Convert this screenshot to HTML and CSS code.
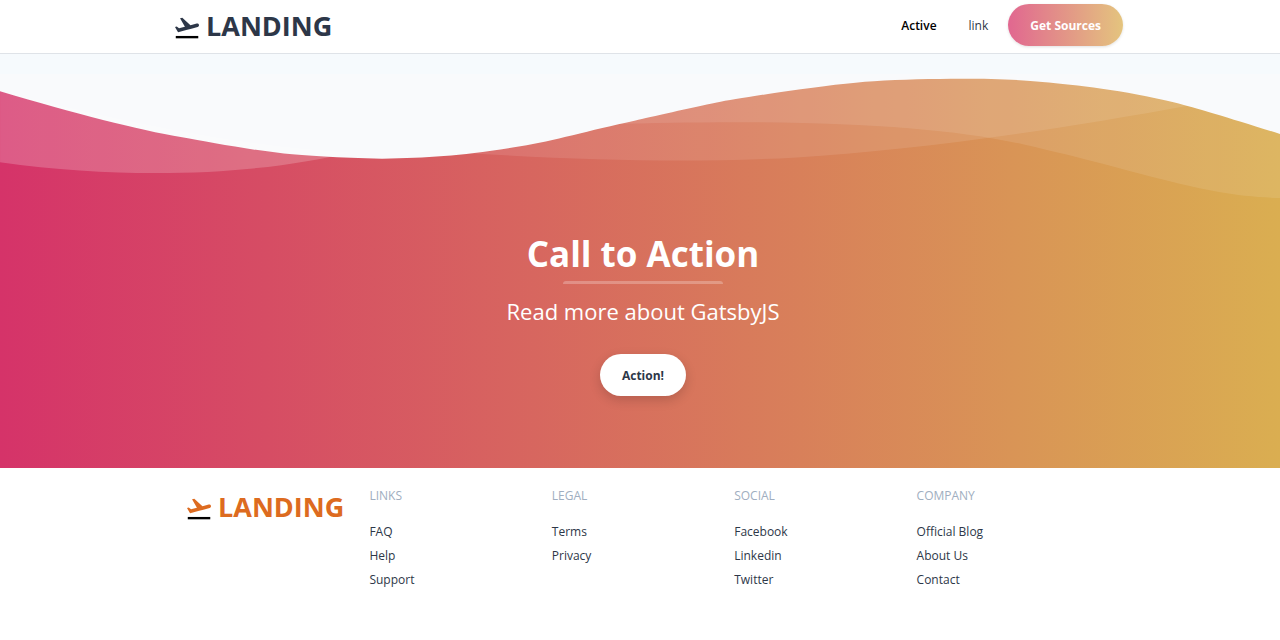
FILE: index.html
```html
<!DOCTYPE html>
<html lang="en">
<head>
<meta charset="utf-8">
<meta name="viewport" content="width=device-width, initial-scale=1">
<title>Landing</title>
<link rel="stylesheet" href="styles.css">
</head>
<body>
<header class="topbar">
  <nav class="container nav">
    <a class="logo" href="#">
      <svg class="logo-icon" viewBox="0 0 512 512" aria-hidden="true">
        <rect x="16.5" y="425.6" width="479.8" height="50.5" fill="#000"/>
        <path fill="currentColor" d="M510.7 189.151C505.271 168.95 484.565 156.956 464.365 162.385L330.156 198.367L155.924 35.878L107.19 49.008L211.729 230.183L86.232 263.767L36.614 224.754L0 234.603L45.957 314.27L65.274 347.727L105.802 336.869L240.011 300.886L349.726 271.469L483.935 235.486C504.134 230.057 516.129 209.352 510.7 189.151Z"/>
      </svg>
      LANDING
    </a>
    <div class="nav-links">
      <a class="nav-link active" href="#">Active</a>
      <a class="nav-link" href="#">link</a>
    </div>
    <button class="pill pill-gradient" type="button">Get Sources</button>
  </nav>
</header>
<main>
  <section class="cta">
    <svg class="wave" viewBox="0 -1 1434 147" aria-hidden="true">
      <g transform="translate(-1 -14)">
        <path fill="#f9fafc" d="M1441,82C1383.555,64.3 1342.555,51.3 1317,45C1259.5,30.824 1206.707,25.526 1169,22C1129.711,17.326 1044.426,17.475 980,21C954.25,22.409 922.25,26.742 884,32C845.122,37.787 818.455,42.121 804,45C776.833,50.41 728.136,61.77 713,65C660.023,76.309 621.544,87.729 584,94C517.525,105.104 484.525,106.438 429,108C379.49,106.484 342.823,104.484 319,102C278.571,97.783 231.737,88.736 205,84C154.629,75.076 86.296,57.743 0,32L0,0L1441,0Z"/>
        <g transform="translate(1 15) rotate(180 719.5 68.5)" fill="#fff">
          <path opacity=".1" d="M0,0C90.728,0.928 147.913,27.188 291.91,59.912C387.908,81.728 543.605,89.335 759,82.733C469.336,156.254 216.336,153.668 0,74.973"/>
          <path opacity=".1" d="M100,104.708C277.413,72.235 426.148,52.525 546.204,45.579C666.259,38.633 810.525,41.798 979,55.074C931.07,56.123 810.303,74.846 616.7,111.243C423.097,147.641 250.863,145.463 100,104.708Z"/>
          <path opacity=".2" d="M1046,51.652C1130.83,29.329 1279.083,17.608 1439,40.166L1439,120C1271.172,77.944 1140.172,55.161 1046,51.652Z"/>
        </g>
      </g>
    </svg>
    <div class="container cta-body">
      <h1 class="cta-title">Call to Action</h1>
      <div class="cta-rule"></div>
      <h2 class="cta-subtitle">Read more about GatsbyJS</h2>
      <button class="pill pill-white" type="button">Action!</button>
    </div>
  </section>
</main>
<footer class="footer">
  <div class="container footer-grid">
    <a class="logo logo-orange" href="#">
      <svg class="logo-icon" viewBox="0 0 512 512" aria-hidden="true">
        <rect x="16.5" y="425.6" width="479.8" height="50.5" fill="#000"/>
        <path fill="currentColor" d="M510.7 189.151C505.271 168.95 484.565 156.956 464.365 162.385L330.156 198.367L155.924 35.878L107.19 49.008L211.729 230.183L86.232 263.767L36.614 224.754L0 234.603L45.957 314.27L65.274 347.727L105.802 336.869L240.011 300.886L349.726 271.469L483.935 235.486C504.134 230.057 516.129 209.352 510.7 189.151Z"/>
      </svg>
      LANDING
    </a>
    <div class="footer-col">
      <p class="footer-heading">LINKS</p>
      <ul class="footer-list">
        <li><a href="#">FAQ</a></li>
        <li><a href="#">Help</a></li>
        <li><a href="#">Support</a></li>
      </ul>
    </div>
    <div class="footer-col">
      <p class="footer-heading">LEGAL</p>
      <ul class="footer-list">
        <li><a href="#">Terms</a></li>
        <li><a href="#">Privacy</a></li>
      </ul>
    </div>
    <div class="footer-col">
      <p class="footer-heading">SOCIAL</p>
      <ul class="footer-list">
        <li><a href="#">Facebook</a></li>
        <li><a href="#">Linkedin</a></li>
        <li><a href="#">Twitter</a></li>
      </ul>
    </div>
    <div class="footer-col">
      <p class="footer-heading">COMPANY</p>
      <ul class="footer-list">
        <li><a href="#">Official Blog</a></li>
        <li><a href="#">About Us</a></li>
        <li><a href="#">Contact</a></li>
      </ul>
    </div>
  </div>
</footer>
</body>
</html>
```
FILE: styles.css
```css
* {
  box-sizing: border-box;
}

body {
  margin: 0;
  background: #fff;
  color: #2d3748;
  font-family: "Segoe UI", "Open Sans", "Noto Sans", sans-serif;
  font-size: 12px;
  line-height: 18px;
}

h1, h2, p, ul {
  margin: 0;
  padding: 0;
}

a {
  color: inherit;
  text-decoration: none;
}

.container {
  width: 100%;
  max-width: 966px;
  margin: 0 auto;
  padding-left: 6px;
}

.topbar {
  position: relative;
  background: #fff;
  border-bottom: 1px solid #dfe3e8;
}

.nav {
  display: flex;
  align-items: center;
  padding: 4px 0 7px 18px;
}

.logo {
  display: flex;
  align-items: center;
  gap: 7px;
  font-size: 27px;
  font-weight: 700;
  line-height: 36px;
}

.logo-icon {
  flex: none;
  width: 24px;
  height: 24px;
  margin-top: 4px;
}

.nav .logo {
  padding-top: 2px;
}

.logo-orange {
  align-self: start;
  color: #dd6b20;
}

.nav-links {
  display: flex;
  gap: 32px;
  margin-left: auto;
  margin-right: 20px;
  padding-top: 2px;
}

.nav-link.active {
  color: #000;
  font-weight: 600;
}

.pill {
  border: 0;
  border-radius: 21px;
  padding: 13px 22px 11px;
  font: inherit;
  font-weight: 700;
}

.pill-gradient {
  background: linear-gradient(90deg, #e16790, #e4c47e);
  color: #fff;
  box-shadow: 0 1px 3px rgba(0, 0, 0, 0.12);
}

.pill-white {
  background: #fff;
  color: #2d3748;
  box-shadow: 0 4px 12px rgba(0, 0, 0, 0.16);
}

.cta {
  background: linear-gradient(90deg, #d53369 0%, #daae51 100%);
}

.wave {
  display: block;
  width: 100%;
  border-top: 20px solid #f6fafd;
}

.cta-body {
  display: flex;
  flex-direction: column;
  align-items: center;
  padding-top: 25px;
  padding-bottom: 72px;
  text-align: center;
}

.cta-title {
  color: #fff;
  font-size: 35px;
  font-weight: 700;
  line-height: 48px;
}

.cta-rule {
  width: 160px;
  height: 3px;
  margin: 3px 0 12px;
  border-radius: 3px 3px 0 0;
  background: rgba(255, 255, 255, 0.25);
}

.cta-subtitle {
  margin-bottom: 28px;
  color: #fff;
  font-size: 22px;
  font-weight: 400;
  line-height: 30px;
}

.footer-grid {
  display: grid;
  grid-template-columns: repeat(5, 1fr);
  padding: 19px 24px 38px 30px;
}

.footer-grid .logo {
  padding-top: 2px;
}

.footer-heading {
  margin-bottom: 18px;
  color: #a0aec0;
}

.footer-list {
  display: grid;
  gap: 6px;
  list-style: none;
}
```
